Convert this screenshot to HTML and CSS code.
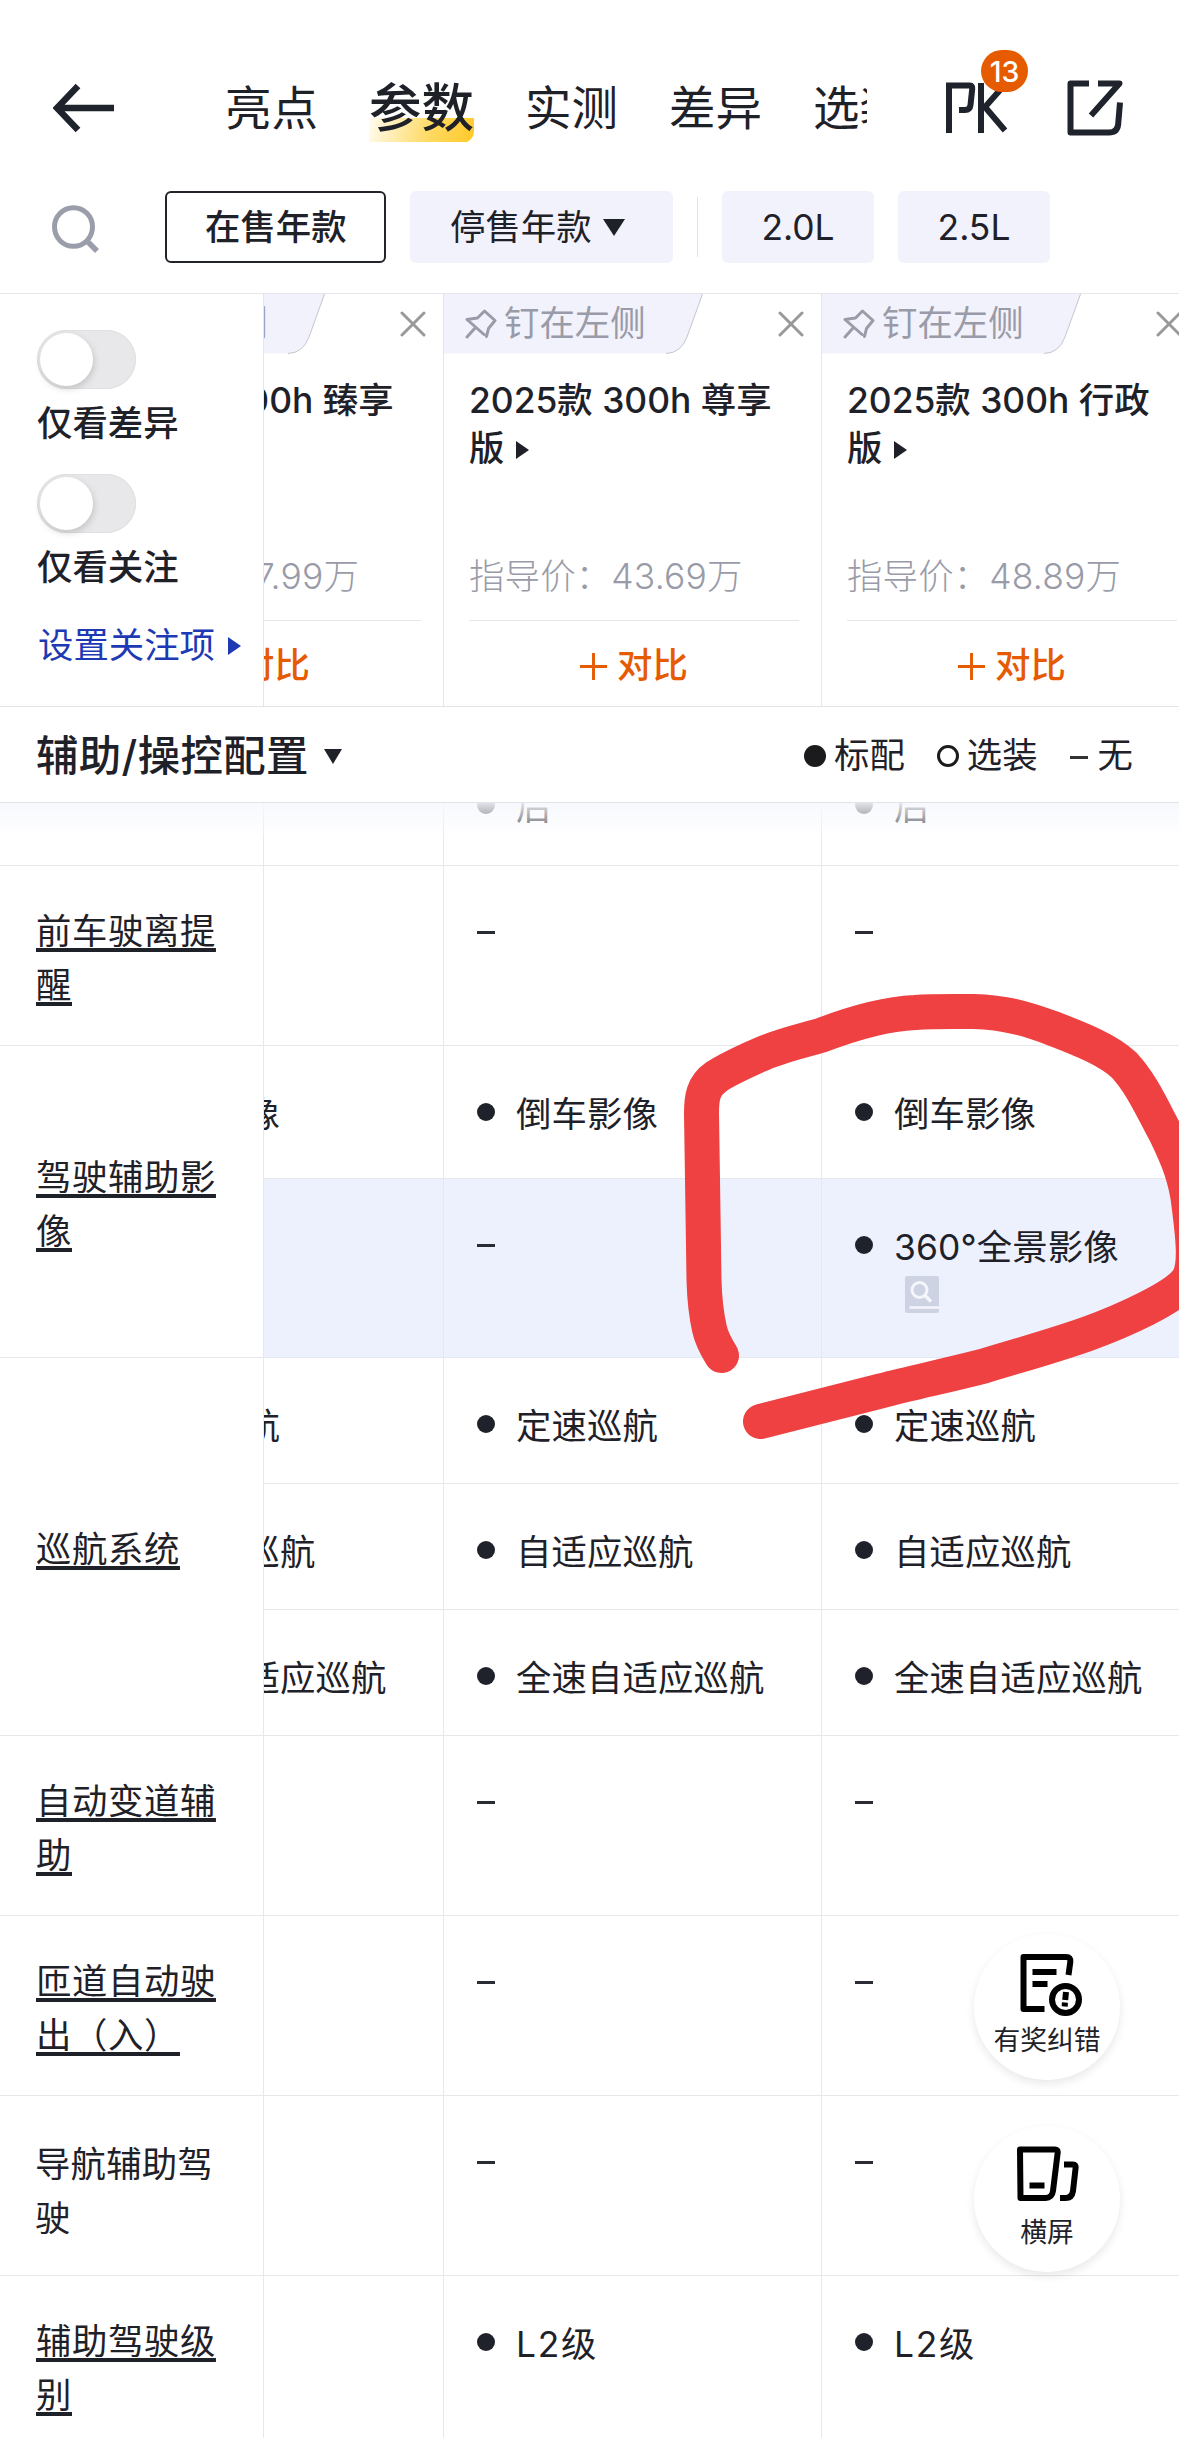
FILE: index.html
```html
<!DOCTYPE html>
<html lang="zh-CN">
<head>
<meta charset="utf-8">
<title>参数配置</title>
<link rel="stylesheet" href="styles.css">
</head>
<body>
<svg class="defs" width="0" height="0" aria-hidden="true">
  <symbol id="i-pin" viewBox="0 0 32 30"><path d="M2 10.500 12.500 9 19.500 2 30 11.500 23.500 19.500 21.500 27.500M2 10.500 19 25.500M10.500 18.500 2 28" fill="none" stroke="currentColor" stroke-width="3" stroke-linejoin="round" stroke-linecap="round"/></symbol>
  <symbol id="i-close" viewBox="0 0 26 26"><path d="M2 2 24 24M24 2 2 24" fill="none" stroke="currentColor" stroke-width="3" stroke-linecap="round"/></symbol>
  <symbol id="i-plus" viewBox="0 0 28 28"><path d="M14 0V28M0 14H28" fill="none" stroke="currentColor" stroke-width="3"/></symbol>
  <symbol id="i-tab" viewBox="0 0 260 60"><path class="tab-fill" d="M0 0H258.500L243 43Q237 59 222 59.500H0Z"/><path class="tab-edge" d="M258.500 0 243 43Q237 59 222 59.500" fill="none"/></symbol>
</svg>

<div class="app">
  <header class="topbar">
    <svg class="back" width="62" height="50" viewBox="0 0 62 50"><path d="M61 25H4M25 3 4 25 25 47" fill="none" stroke="#1f232b" stroke-width="6.500"/></svg>
    <nav class="tabs">
      <span class="tab">亮点</span><span class="tab tab--active"><b>参数</b></span><span class="tab">实测</span><span class="tab">差异</span><span class="tab">选装</span>
    </nav>
    <div class="pk">
      <svg width="62" height="52" viewBox="0 0 62 52"><path d="M3 51V3.500H24Q26.500 3.500 26.200 7L24.500 23Q24 28 19 28H13M35 1V51M58.500 3 39 25 59 48.500" fill="none" stroke="#1f232b" stroke-width="6"/></svg>
      <span class="badge">13</span>
    </div>
    <svg class="share" width="57" height="56" viewBox="0 0 57 56"><path d="M22 3.500H3.500V52.500H42Q50.500 52.500 51.200 44L53 22.500M31 3.500H52.500L24 35.500" fill="none" stroke="#1f232b" stroke-width="6" stroke-linejoin="round"/></svg>
  </header>

  <div class="filters">
    <svg class="search" width="50" height="50" viewBox="0 0 50 50"><ellipse cx="22.500" cy="23" rx="19" ry="19.300" fill="none" stroke="#9a9eaa" stroke-width="5"/><path d="M36 37 46 47" stroke="#9a9eaa" stroke-width="5.500"/></svg>
    <span class="chip chip--on">在售年款</span>
    <span class="chip chip--menu">停售年款<i class="tri tri--chip"></i></span>
    <i class="split"></i>
    <span class="chip chip--engine">2.0L</span>
    <span class="chip chip--engine">2.5L</span>
  </div>

  <section class="models">
    <aside class="options">
      <i class="switch"></i><span class="opt">仅看差异</span>
      <i class="switch"></i><span class="opt">仅看关注</span>
      <span class="link">设置关注项<i class="arrow"></i></span>
    </aside>
    <div class="view"><div class="track">
      <article class="model">
        <div class="pinrow"><svg class="shape"><use href="#i-tab"/></svg><span class="pin"><svg class="pinicon"><use href="#i-pin"/></svg>钉在左侧</span><svg class="close"><use href="#i-close"/></svg></div>
        <h2>2025款 300h 臻享版<i class="arrow"></i></h2>
        <p class="price">指导价：37.99万</p>
        <div class="compare"><svg class="plus"><use href="#i-plus"/></svg>对比</div>
      </article>
      <article class="model">
        <div class="pinrow"><svg class="shape"><use href="#i-tab"/></svg><span class="pin"><svg class="pinicon"><use href="#i-pin"/></svg>钉在左侧</span><svg class="close"><use href="#i-close"/></svg></div>
        <h2>2025款 300h 尊享版<i class="arrow"></i></h2>
        <p class="price">指导价：43.69万</p>
        <div class="compare"><svg class="plus"><use href="#i-plus"/></svg>对比</div>
      </article>
      <article class="model">
        <div class="pinrow"><svg class="shape"><use href="#i-tab"/></svg><span class="pin"><svg class="pinicon"><use href="#i-pin"/></svg>钉在左侧</span><svg class="close"><use href="#i-close"/></svg></div>
        <h2>2025款 300h 行政版<i class="arrow"></i></h2>
        <p class="price">指导价：48.89万</p>
        <div class="compare"><svg class="plus"><use href="#i-plus"/></svg>对比</div>
      </article>
    </div></div>
  </section>

  <div class="section">
    <h1>辅助/操控配置<i class="tri"></i></h1>
    <div class="legend">
      <span><i class="mark mark--full"></i>标配</span>
      <span><i class="mark mark--ring"></i>选装</span>
      <span><i class="mark mark--none"></i>无</span>
    </div>
  </div>

  <main class="table">
    <div class="scroll">
      <div class="group group--first">
        <div class="name"></div>
        <div class="view"><div class="track row"><div class="cell"></div><div class="cell"><i class="dot"></i>后</div><div class="cell"><i class="dot"></i>后</div></div></div>
      </div>
      <div class="group">
        <div class="name"><u>前车驶离提醒</u></div>
        <div class="view"><div class="track row row--tall"><div class="cell"></div><div class="cell"><i class="dash"></i></div><div class="cell"><i class="dash"></i></div></div></div>
      </div>
      <div class="group">
        <div class="name"><u>驾驶辅助影像</u></div>
        <div class="view">
          <div class="track row row--camera"><div class="cell"><i class="dot"></i>倒车影像</div><div class="cell"><i class="dot"></i>倒车影像</div><div class="cell"><i class="dot"></i>倒车影像</div></div>
          <div class="track row row--diff"><div class="cell"></div><div class="cell"><i class="dash"></i></div><div class="cell"><i class="dot"></i><span>360°全景影像<svg class="preview" width="34" height="37" viewBox="0 0 34 37"><rect width="34" height="37" rx="2" fill="#cdd3e2"/><circle cx="14.500" cy="14" r="7.500" fill="none" stroke="#f4f6fc" stroke-width="3"/><path d="M20 19.500 26 25.500" stroke="#f4f6fc" stroke-width="3.500"/><path d="M4.500 31.500H34" stroke="#f4f6fc" stroke-width="2.500"/></svg></span></div></div>
        </div>
      </div>
      <div class="group">
        <div class="name"><u>巡航系统</u></div>
        <div class="view">
          <div class="track row"><div class="cell"><i class="dot"></i>定速巡航</div><div class="cell"><i class="dot"></i>定速巡航</div><div class="cell"><i class="dot"></i>定速巡航</div></div>
          <div class="track row"><div class="cell"><i class="dot"></i>自适应巡航</div><div class="cell"><i class="dot"></i>自适应巡航</div><div class="cell"><i class="dot"></i>自适应巡航</div></div>
          <div class="track row"><div class="cell"><i class="dot"></i>全速自适应巡航</div><div class="cell"><i class="dot"></i>全速自适应巡航</div><div class="cell"><i class="dot"></i>全速自适应巡航</div></div>
        </div>
      </div>
      <div class="group">
        <div class="name"><u>自动变道辅助</u></div>
        <div class="view"><div class="track row row--tall"><div class="cell"></div><div class="cell"><i class="dash"></i></div><div class="cell"><i class="dash"></i></div></div></div>
      </div>
      <div class="group">
        <div class="name"><u>匝道自动驶出（入）</u></div>
        <div class="view"><div class="track row row--tall"><div class="cell"></div><div class="cell"><i class="dash"></i></div><div class="cell"><i class="dash"></i></div></div></div>
      </div>
      <div class="group">
        <div class="name name--plain">导航辅助驾驶</div>
        <div class="view"><div class="track row row--tall"><div class="cell"></div><div class="cell"><i class="dash"></i></div><div class="cell"><i class="dash"></i></div></div></div>
      </div>
      <div class="group">
        <div class="name"><u>辅助驾驶级别</u></div>
        <div class="view"><div class="track row row--tall"><div class="cell"></div><div class="cell cell--level"><i class="dot"></i>L2级</div><div class="cell cell--level"><i class="dot"></i>L2级</div></div></div>
      </div>
    </div>
    <div class="fade"></div>
  </main>

  <svg class="scribble" width="1179" height="2438" viewBox="0 0 1179 2438"><path d="M721.500 1355.500C715 1345 711.500 1338 709.500 1329C705.500 1311 704.500 1300 704 1280L701.500 1113C701.500 1098 703 1086 716 1077C728 1069 742 1063 757 1056C778 1046 798 1042 822 1035C856 1022 885 1014 915 1012.500C935 1011 955 1011.500 973.500 1011.500C1008 1012.500 1030 1020 1053 1028.500C1083 1040 1108 1050 1124 1065C1141 1083 1152 1108 1166 1134C1178 1159 1186 1178 1189 1205C1192 1230 1197 1262 1189 1278C1178 1297 1120 1322 1087 1334C1050 1347 1020 1355 984 1366C945 1376 915 1382 880.500 1391L760.500 1421.500" fill="none" stroke="#ef4042" stroke-width="35" stroke-linecap="round" stroke-linejoin="round"/></svg>

  <div class="floats">
    <div class="float">
      <svg width="62" height="62" viewBox="0 0 62 62"><path d="M24.500 55H3.500V3H46Q51 3 50.300 8L48.500 21M12.500 18H36.500M12.500 30H27.500" fill="none" stroke="#000" stroke-width="6" stroke-linejoin="round"/><circle cx="45.500" cy="45.500" r="13.500" fill="none" stroke="#000" stroke-width="6"/><path d="M46 38 45.200 46M44.900 48.500 44.700 52.500" stroke="#000" stroke-width="6"/></svg>
      <span>有奖纠错</span>
    </div>
    <div class="float float--wide">
      <svg width="62" height="56" viewBox="0 0 62 56"><path d="M3 3.500H38Q41 3.500 40.700 6.500L36 45Q35 52 28.500 52H3.500ZM12.500 39.500H27.500M47 18.500H56Q59 18.500 58.600 22L56 45Q55 52 48.500 52H43" fill="none" stroke="#000" stroke-width="6" stroke-linejoin="round"/></svg>
      <span>横屏</span>
    </div>
  </div>
</div>
</body>
</html>
```

FILE: styles.css
```css
* { box-sizing: border-box; }
body { margin: 0; background: #fff; }
i { font-style: normal; display: inline-block; flex: none; }
svg { display: block; flex: none; }
.defs { position: absolute; }
h1, h2, p { margin: 0; font-weight: 500; }

.app {
  position: relative;
  width: 1179px;
  height: 2438px;
  overflow: hidden;
  background: #fff;
  color: #1f2129;
  font-family: Inter, "Noto Sans CJK SC", sans-serif;
  font-size: 35.4px;
  line-height: 54px;
}

/* top navigation */
.topbar { display: flex; align-items: center; height: 191px; padding: 24px 54px 0 53px; }
.tabs { display: flex; align-items: center; gap: 51px; width: 642px; margin-left: 110px; overflow: hidden; white-space: nowrap; line-height: 70px; }
.tab { font-size: 46.5px; flex: none; }
.tab--active {
  font-size: 52.5px;
  background: linear-gradient(105deg, rgba(255, 232, 160, .15), #ffd95f 60%, #ffc928) no-repeat 0 45px / 105px 24px;
  border-radius: 0 0 12px 0;
}
.tab--active b { font-weight: 500; }
.pk { position: relative; margin-left: 79px; }
.badge {
  position: absolute; left: 35px; top: -32px; width: 47px; height: 42px; border-radius: 21px;
  background: #e65a00; color: #fff; font-size: 28.5px; font-weight: 500; line-height: 43px; text-align: center;
}
.share { margin-left: 59px; }

/* filter chips */
.filters { display: flex; height: 102px; padding-left: 51px; }
.search { margin: 13px 64px 0 0; }
.chip {
  display: flex; flex: none; align-items: center; height: 72px; padding: 1px 0 0 40px; margin-right: 24px;
  border-radius: 6px; background: #f2f2fc; white-space: nowrap;
}
.chip--on { width: 221px; padding-left: 38px; background: #fff; border: 2px solid #22242b; font-weight: 500; }
.chip--menu { width: 263px; }
.chip--engine { width: 152px; padding-left: 0; justify-content: center; }
.split { width: 1px; height: 60px; margin: 6px 24px 0 0; background: #e3e4ea; }
.tri { border: solid transparent; border-width: 15px 9.500px 0; border-top-color: #1f2129; }
.tri--chip { margin-left: 11px; border-width: 17px 11px 0; border-top-color: #1f2129; }

/* pinned model headers */
.models { display: flex; height: 413px; border-top: 1px solid #e5e6ea; }
.options { display: flex; flex-direction: column; align-items: flex-start; width: 264px; padding: 36px 0 0 37px; border-right: 1px solid #e5e6ea; line-height: 50px; }
.switch {
  width: 99px; height: 59px; padding: 3px; border-radius: 30px; background: #e8e8ea;
  box-shadow: inset 0 0 0 1px #e0e0e2;
}
.switch::before { content: ""; display: block; width: 53px; height: 53px; border-radius: 50%; background: #fff; box-shadow: 1px 3px 7px rgba(0, 0, 0, .16); }
.opt { margin: 10px 0 25px; font-weight: 500; }
.link { display: flex; align-items: center; margin-top: 3px; padding-left: 1px; color: #1d3ab4; }
.arrow { border: solid transparent; border-width: 9.500px 0 9.500px 13px; border-left-color: currentColor; }
.link .arrow { margin-left: 13px; }
.view { flex: 1; min-width: 0; overflow: hidden; }
.track { display: flex; width: 1134px; margin-left: -198px; }
.model { width: 378px; height: 412px; padding: 0 22px 0 25px; border-right: 1px solid #e5e6ea; }
.pinrow { position: relative; display: flex; justify-content: space-between; align-items: center; height: 60px; margin: 0 -5px 23px -25px; padding: 0 0 1px 21px; }
.shape { position: absolute; left: 0; top: 0; width: 260px; height: 60px; }
.tab-fill { fill: #f2f2fc; }
.tab-edge { stroke: #c4c5cc; stroke-width: 1; }
.pin { position: relative; display: flex; align-items: center; gap: 7px; color: #999ba8; }
.pinicon { width: 32px; height: 30px; }
.close { width: 26px; height: 26px; color: #999; }
.model h2 { height: 176px; font-size: 35.4px; line-height: 48px; }
.model h2 .arrow { margin: 0 0 2px 12px; }
.price { height: 68px; border-bottom: 1px solid #e5e6ea; line-height: 48px; font-weight: 300; letter-spacing: .2px; color: #999ba8; white-space: nowrap; }
.compare { display: flex; align-items: center; justify-content: center; gap: 10px; height: 85px; padding-top: 5px; color: #e65a00; font-weight: 500; }
.plus { width: 27px; height: 27px; }

/* section title and legend */
.section { display: flex; align-items: center; justify-content: space-between; height: 97px; padding: 2px 46px 0 36px; border: solid #e2e4ea; border-width: 1px 0; }
.section h1 { display: flex; align-items: center; padding-top: 1px; font-size: 42.4px; letter-spacing: .4px; }
.section h1 .tri { margin-left: 15px; }
.legend { display: flex; gap: 32px; }
.legend span { display: flex; align-items: center; gap: 8px; }
.mark { width: 22px; height: 22px; }
.mark--full { border-radius: 50%; background: #1b1b1d; }
.mark--ring { border-radius: 50%; border: 3px solid #1b1b1d; }
.mark--none { width: 18px; height: 3px; margin: 4px 2px 0 0; background: #333; }

/* spec table */
.table { position: relative; height: 1635px; overflow: hidden; }
.scroll { margin-top: -64px; }
.group { display: flex; }
.name { display: flex; align-items: center; width: 264px; padding: 6px 45px 0 36px; border: solid #e6e8ec; border-width: 0 1px 1px 0; letter-spacing: .6px; }
.name u { text-decoration-thickness: 4px; text-underline-offset: 4px; text-decoration-skip-ink: none; }
.name--plain { padding: 13px 46px 0 35px; letter-spacing: .2px; }
.row { height: 126px; }
.group--first .row { height: 127px; }
.row--tall { height: 180px; }
.row--camera { height: 133px; }
.row--diff { height: 179px; background: #edf1fd; }
.cell { display: flex; width: 378px; padding: 42px 0 0 33px; border: solid #e6e8ec; border-width: 0 1px 1px 0; white-space: nowrap; letter-spacing: .1px; }
.row--diff .cell { border-color: #e3e8f2; }
.cell--level { letter-spacing: 1.700px; }
.dot { width: 18px; height: 18px; margin: 15px 21px 0 0; border-radius: 50%; background: #1f212b; }
.dash { width: 18px; height: 3px; margin-top: 23px; background: #2a2c34; }
.preview { margin: 1px 0 0 11px; }
.fade { position: absolute; left: 0; top: 0; width: 100%; height: 36px; background: linear-gradient(rgba(246, 248, 253, .9), rgba(250, 251, 254, .35) 75%, rgba(255, 255, 255, 0)); }

/* overlays */
.scribble { position: absolute; left: 0; top: 0; }
.floats { position: absolute; left: 974px; top: 1934px; display: grid; gap: 46px; }
.float {
  display: flex; flex-direction: column; align-items: center; width: 146px; height: 146px; padding-top: 20px;
  border-radius: 50%; background: #fff; box-shadow: 0 4px 10px rgba(0, 0, 0, .09);
  font-size: 26.8px; line-height: 40px; color: #1f2129;
}
.float svg { margin-left: 8px; }
.float span { margin-top: 4px; }
.float--wide svg { margin-left: 1px; }
.float--wide span { margin-top: 10px; }
```
